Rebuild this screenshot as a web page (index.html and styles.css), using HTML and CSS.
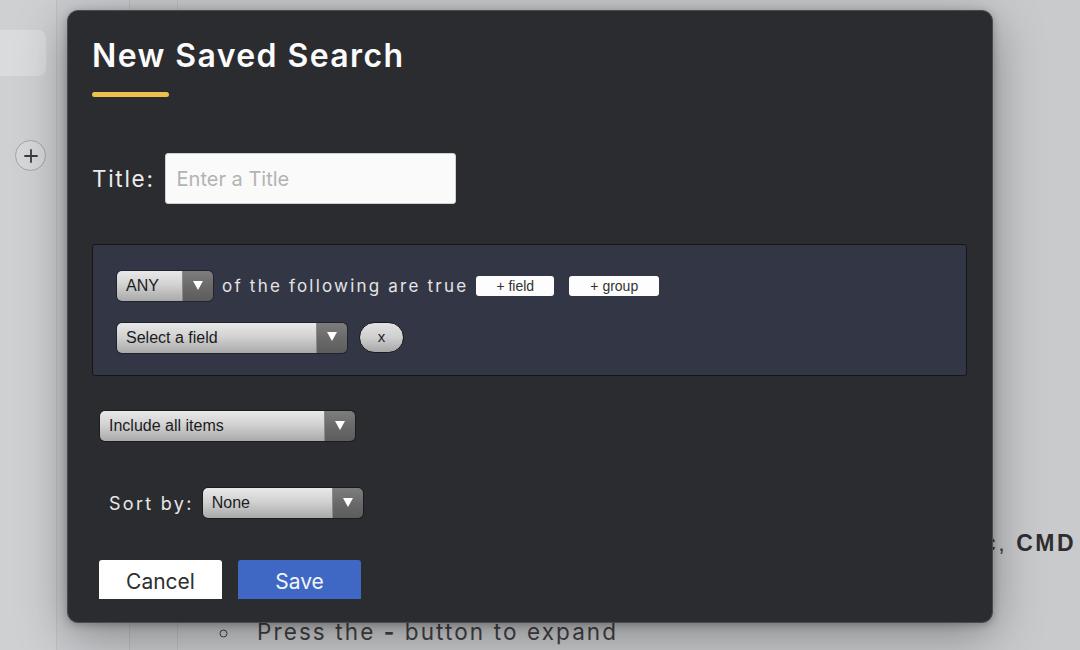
FILE: index.html
```html
<!DOCTYPE html>
<html lang="en">
<head>
<meta charset="utf-8">
<title>New Saved Search</title>
<link rel="stylesheet" href="styles.css">
</head>
<body>
<div class="app">
  <aside class="sidebar">
    <div class="nav-pill"></div>
    <div class="add-btn">
      <svg width="16" height="16" viewBox="0 0 16 16"><path d="M8 2v12M2 8h12" stroke="#3a3a3a" stroke-width="1.8" stroke-linecap="round"/></svg>
    </div>
  </aside>
  <div class="rail"></div>
  <div class="rail rail-narrow"></div>
  <main class="content">
    <p class="hint-line"><span class="hidden-part">Esc</span>, <b>CMD</b></p>
    <ul class="hint-list">
      <li>Press the <b>-</b> button to expand</li>
    </ul>
  </main>
</div>

<div class="modal">
  <div class="modal-body">
    <h1 class="modal-title">New Saved Search</h1>
    <div class="title-bar"></div>

    <div class="title-row">
      <label class="title-label">Title:</label>
      <div class="title-input">Enter a Title</div>
    </div>

    <div class="query-box">
      <div class="query-row">
        <div class="select select-any"><span class="select-text">ANY</span><span class="select-arrow"></span></div>
        <span class="query-text">of the following are true</span>
        <button class="chip chip-field">+ field</button>
        <button class="chip chip-group">+ group</button>
      </div>
      <div class="query-row query-row-second">
        <div class="select select-field"><span class="select-text">Select a field</span><span class="select-arrow"></span></div>
        <button class="pill-btn">x</button>
      </div>
    </div>

    <div class="include-row">
      <div class="select select-include"><span class="select-text">Include all items</span><span class="select-arrow"></span></div>
    </div>

    <div class="sort-row">
      <span class="sort-label">Sort by:</span>
      <div class="select select-sort"><span class="select-text">None</span><span class="select-arrow"></span></div>
    </div>

    <div class="actions">
      <button class="btn btn-cancel">Cancel</button>
      <button class="btn btn-save">Save</button>
    </div>
  </div>
</div>
</body>
</html>
```

FILE: styles.css
```css
* { box-sizing: border-box; }

html, body {
  margin: 0;
  padding: 0;
  width: 1080px;
  height: 650px;
  overflow: hidden;
  background: #c9cacc;
  font-family: Inter, "Noto Sans", sans-serif;
}

.app {
  display: flex;
  height: 650px;
}

.sidebar {
  width: 57px;
  background: #cfd0d2;
  border-right: 1px solid #c0c1c3;
  padding-top: 30px;
}

.nav-pill {
  width: 46px;
  height: 46px;
  background: #dadbdd;
  border-radius: 0 8px 8px 0;
}

.add-btn {
  width: 31px;
  height: 31px;
  margin: 64px 0 0 15px;
  border-radius: 50%;
  border: 1.5px solid #a4a5a7;
  background: #d6d7d9;
  display: flex;
  align-items: center;
  justify-content: center;
}

.rail {
  width: 73px;
  border-right: 1px solid #bdbec0;
  background: #cbcccf;
}

.rail-narrow {
  width: 48px;
  background: #c9cacc;
}

.content {
  flex: 1;
  padding-top: 526px;
  color: #3a3a3c;
}

.hint-line {
  margin: 0;
  font-family: "Liberation Sans", Arial, sans-serif;
  font-size: 23px;
  letter-spacing: 2.6px;
  line-height: 34px;
  padding-left: 774px;
  white-space: nowrap;
}

.hint-line b { font-weight: 700; color: #2e2e30; }

.hint-list {
  margin: 57px 0 0 0;
  padding-left: 63px;
  list-style: circle;
  font-size: 22.5px;
  letter-spacing: 2.1px;
  line-height: 30px;
  color: #404043;
}

.hint-list li { padding-left: 16px; }

/* ---------- modal ---------- */
.modal {
  position: absolute;
  left: 67px;
  top: 10px;
  width: 926px;
  height: 613px;
  background: #2b2c30;
  border: 1px solid #4a4b50;
  border-radius: 11px;
  box-shadow: 0 12px 50px rgba(0, 0, 0, 0.35), 0 2px 8px rgba(0, 0, 0, 0.25);
  padding: 25px 25px 24px 24px;
}

.modal-body {
  height: 563px;
  overflow: hidden;
  display: flex;
  flex-direction: column;
  align-items: flex-start;
}

.modal-body > * { flex-shrink: 0; }

.modal-title {
  margin: 0;
  font-size: 32px;
  line-height: 40px;
  font-weight: 600;
  letter-spacing: 1.4px;
  color: #fbfbfb;
}

.title-bar {
  margin-top: 16px;
  width: 77px;
  height: 5px;
  border-radius: 3px;
  background: #ecc24c;
}

.title-row {
  margin-top: 56px;
  display: flex;
  align-items: center;
  gap: 10px;
}

.title-label {
  font-size: 22.5px;
  letter-spacing: 1.7px;
  color: #ececec;
}

.title-input {
  width: 291px;
  height: 51px;
  background: #fafafa;
  border: 1px solid #d0d0d0;
  border-radius: 3px;
  font-size: 20px;
  color: #b3b3b3;
  padding-left: 11px;
  display: flex;
  align-items: center;
}

.query-box {
  margin-top: 40px;
  width: 875px;
  height: 132px;
  background: #333745;
  border: 1px solid #151619;
  border-radius: 3px;
  padding: 26px 24px 0 24px;
  display: flex;
  flex-direction: column;
  gap: 21px;
}

.query-row {
  display: flex;
  align-items: center;
}

.query-text {
  margin-left: 9px;
  font-size: 17px;
  letter-spacing: 2.2px;
  color: #e4e4e6;
}

.chip {
  font-family: "Liberation Sans", Arial, sans-serif;
  font-size: 14px;
  color: #333;
  background: #fdfdfd;
  border: none;
  border-radius: 3px;
  height: 20px;
  padding: 0;
  display: flex;
  align-items: center;
  justify-content: center;
}

.chip-field { width: 78px; margin-left: 8px; }
.chip-group { width: 90px; margin-left: 15px; }

/* select look */
.select {
  display: flex;
  height: 30px;
  border-radius: 5px;
  overflow: hidden;
  box-shadow: 0 0 0 1px rgba(0, 0, 0, 0.35);
  font-family: "Liberation Sans", Arial, sans-serif;
  font-size: 16px;
  color: #1c1c1c;
}

.select-text {
  flex: 1;
  display: flex;
  align-items: center;
  padding-left: 9px;
  background: linear-gradient(to bottom, #e8e8e8 0%, #d2d2d2 45%, #a9a9a9 100%);
}

.select-arrow {
  width: 31px;
  background: linear-gradient(to bottom, #7d7d7d 0%, #6a6a6a 50%, #5c5c5c 100%);
  border-left: 1px solid #8a8a8a;
  display: flex;
  align-items: center;
  justify-content: center;
}

.select-arrow::after {
  content: "";
  width: 0;
  height: 0;
  border-left: 5.5px solid transparent;
  border-right: 5.5px solid transparent;
  border-top: 9px solid #ffffff;
  margin-top: -2px;
}

.select-any { width: 96px; }
.select-field { width: 230px; }
.select-include { width: 255px; }
.select-sort { width: 160px; }

.pill-btn {
  margin-left: 12px;
  width: 45px;
  height: 31px;
  border-radius: 16px;
  border: 1px solid #1b1b1e;
  background: linear-gradient(to bottom, #e2e2e2 0%, #cfcfcf 50%, #a7a7a7 100%);
  font-family: "Liberation Sans", Arial, sans-serif;
  font-size: 15px;
  color: #222;
  padding: 0 0 2px 0;
}

.include-row {
  margin-top: 35px;
  padding-left: 8px;
}

.sort-row {
  margin-top: 47px;
  padding-left: 17px;
  display: flex;
  align-items: center;
  gap: 9px;
}

.sort-label {
  font-size: 18px;
  letter-spacing: 2.3px;
  color: #e8e8e8;
}

.actions {
  margin-top: 42px;
  padding-left: 7px;
  display: flex;
  gap: 16px;
}

.btn {
  width: 123px;
  height: 46px;
  border: none;
  border-radius: 3px;
  font-family: Inter, "Noto Sans", sans-serif;
  font-size: 21px;
  padding: 0 0 4px 0;
  display: flex;
  align-items: center;
  justify-content: center;
}

.btn-cancel { background: #ffffff; color: #2f2f2f; }
.btn-save { background: #3e68c4; color: #f2f4fa; }
```
